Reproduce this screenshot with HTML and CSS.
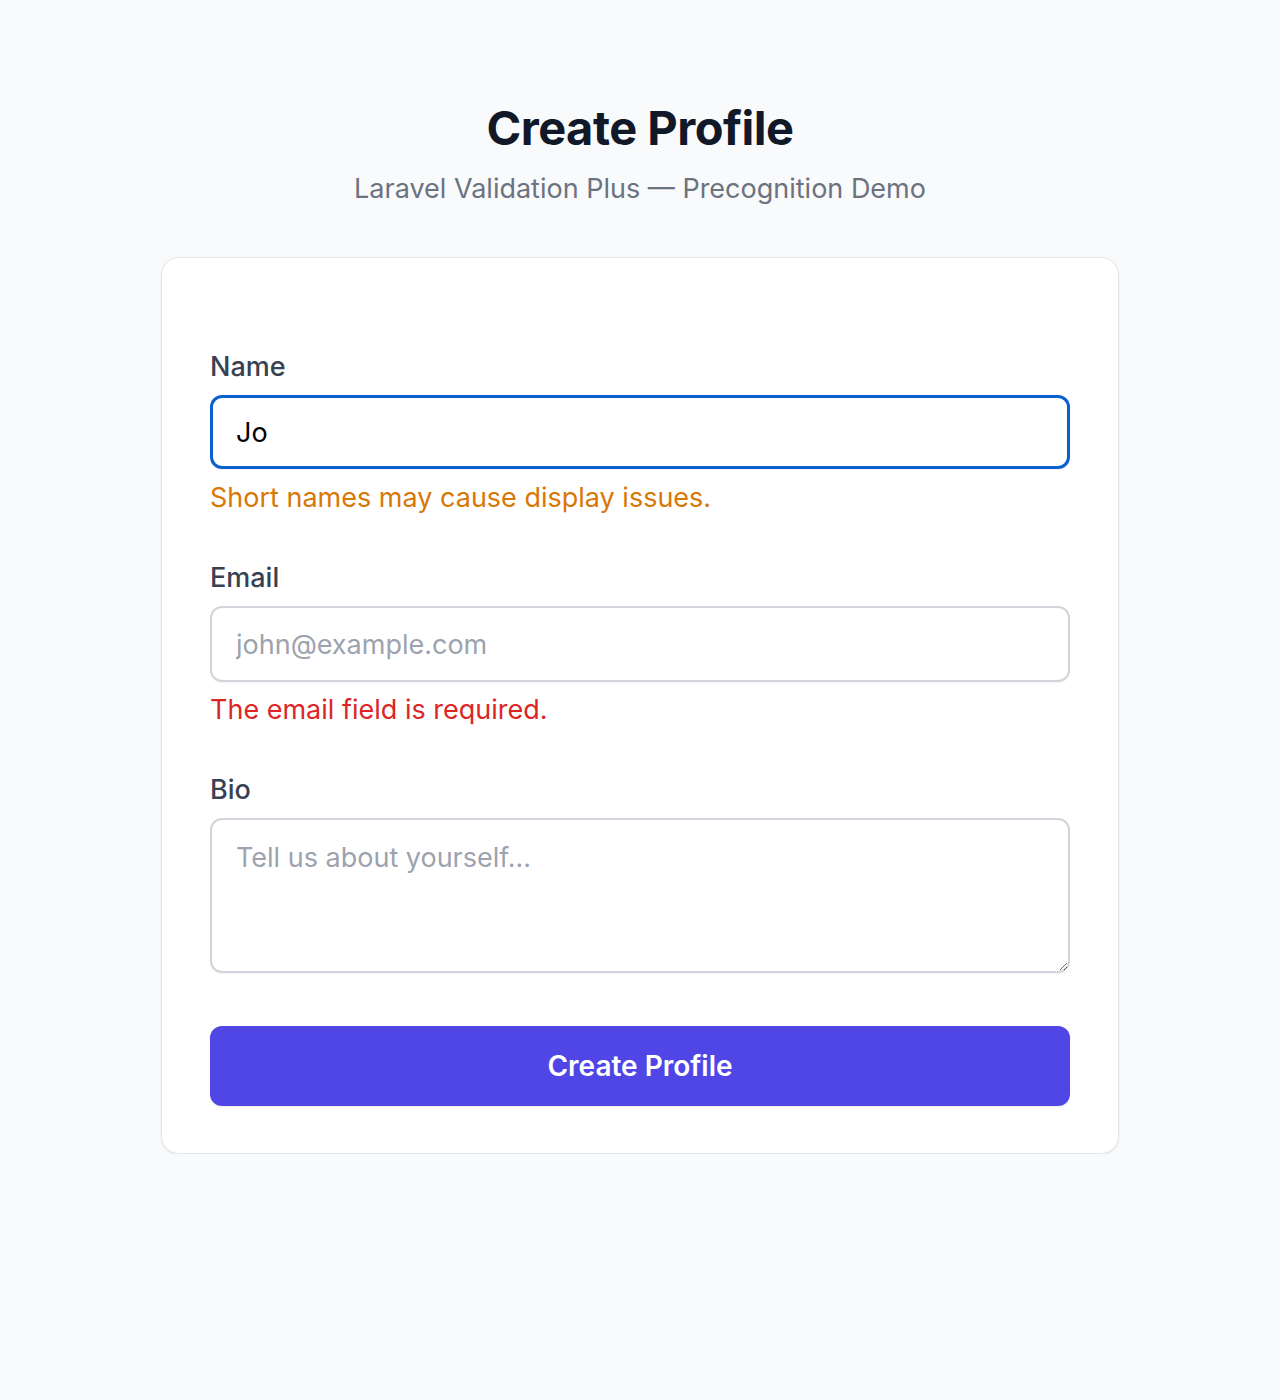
FILE: index.html
```html
<!DOCTYPE html>
<html lang="en">
<head>
<meta charset="utf-8">
<title>Create Profile</title>
<link rel="stylesheet" href="styles.css">
</head>
<body>
<main class="page">
  <header class="header">
    <h1 class="title">Create Profile</h1>
    <p class="subtitle">Laravel Validation Plus — Precognition Demo</p>
  </header>
  <form class="card">
    <div class="field">
      <label class="label" for="name">Name</label>
      <input class="input input-focus" id="name" type="text" value="Jo">
      <p class="msg msg-warn">Short names may cause display issues.</p>
    </div>
    <div class="field">
      <label class="label" for="email">Email</label>
      <input class="input" id="email" type="email" placeholder="john@example.com">
      <p class="msg msg-error">The email field is required.</p>
    </div>
    <div class="field">
      <label class="label" for="bio">Bio</label>
      <textarea class="input textarea" id="bio" placeholder="Tell us about yourself..."></textarea>
    </div>
    <button class="button" type="button">Create Profile</button>
  </form>
</main>
</body>
</html>
```
FILE: styles.css
```css
* { box-sizing: border-box; }
html, body { margin: 0; padding: 0; }
body {
  background: #f9fafb;
  font-family: Inter, "Noto Sans", "Liberation Sans", sans-serif;
  color: #111827;
}
.page {
  display: flex;
  flex-direction: column;
  align-items: center;
  padding-top: 96px;
}
.header { text-align: center; }
.title {
  margin: 0;
  font-size: 47px;
  line-height: 64px;
  font-weight: 700;
  color: #111827;
  letter-spacing: -0.5px;
}
.subtitle {
  margin: 8px 0 0;
  font-size: 27px;
  line-height: 42px;
  color: #6b7280;
}
.card {
  margin-top: 47px;
  width: 958px;
  background: #fff;
  border: 1px solid #e5e7eb;
  border-radius: 18px;
  box-shadow: 0 1px 3px rgba(0,0,0,0.06), 0 1px 2px rgba(0,0,0,0.04);
  padding: 89px 48px 47px;
  display: flex;
  flex-direction: column;
  gap: 40px;
}
.field { display: flex; flex-direction: column; }
.label {
  font-size: 27px;
  line-height: 40px;
  font-weight: 500;
  color: #374151;
  margin-bottom: 8px;
}
.input {
  width: 100%;
  height: 76px;
  border: 2px solid #d1d5db;
  border-radius: 12px;
  padding: 0 24px;
  font-family: inherit;
  font-size: 27px;
  color: #000;
  background: #fff;
  outline: none;
  box-shadow: 0 1px 2px rgba(0,0,0,0.05);
}
.input::placeholder { color: #9ca3af; }
.input-focus {
  border: 3px solid #0b60d0;
  height: 74px;
  padding-left: 23px;
}
.textarea {
  height: 155px;
  padding-top: 21px;
  resize: vertical;
  display: block;
}
.msg {
  margin: 9px 0 0;
  font-size: 27px;
  line-height: 40px;
}
.msg-warn { color: #d97706; }
.msg-error { color: #dc2626; margin-top: 8px; }
.button {
  margin-top: 13px;
  height: 80px;
  width: 100%;
  border: none;
  border-radius: 12px;
  background: #4f46e5;
  color: #fff;
  font-family: inherit;
  font-size: 28px;
  font-weight: 600;
  box-shadow: 0 1px 2px rgba(0,0,0,0.08);
}
```
